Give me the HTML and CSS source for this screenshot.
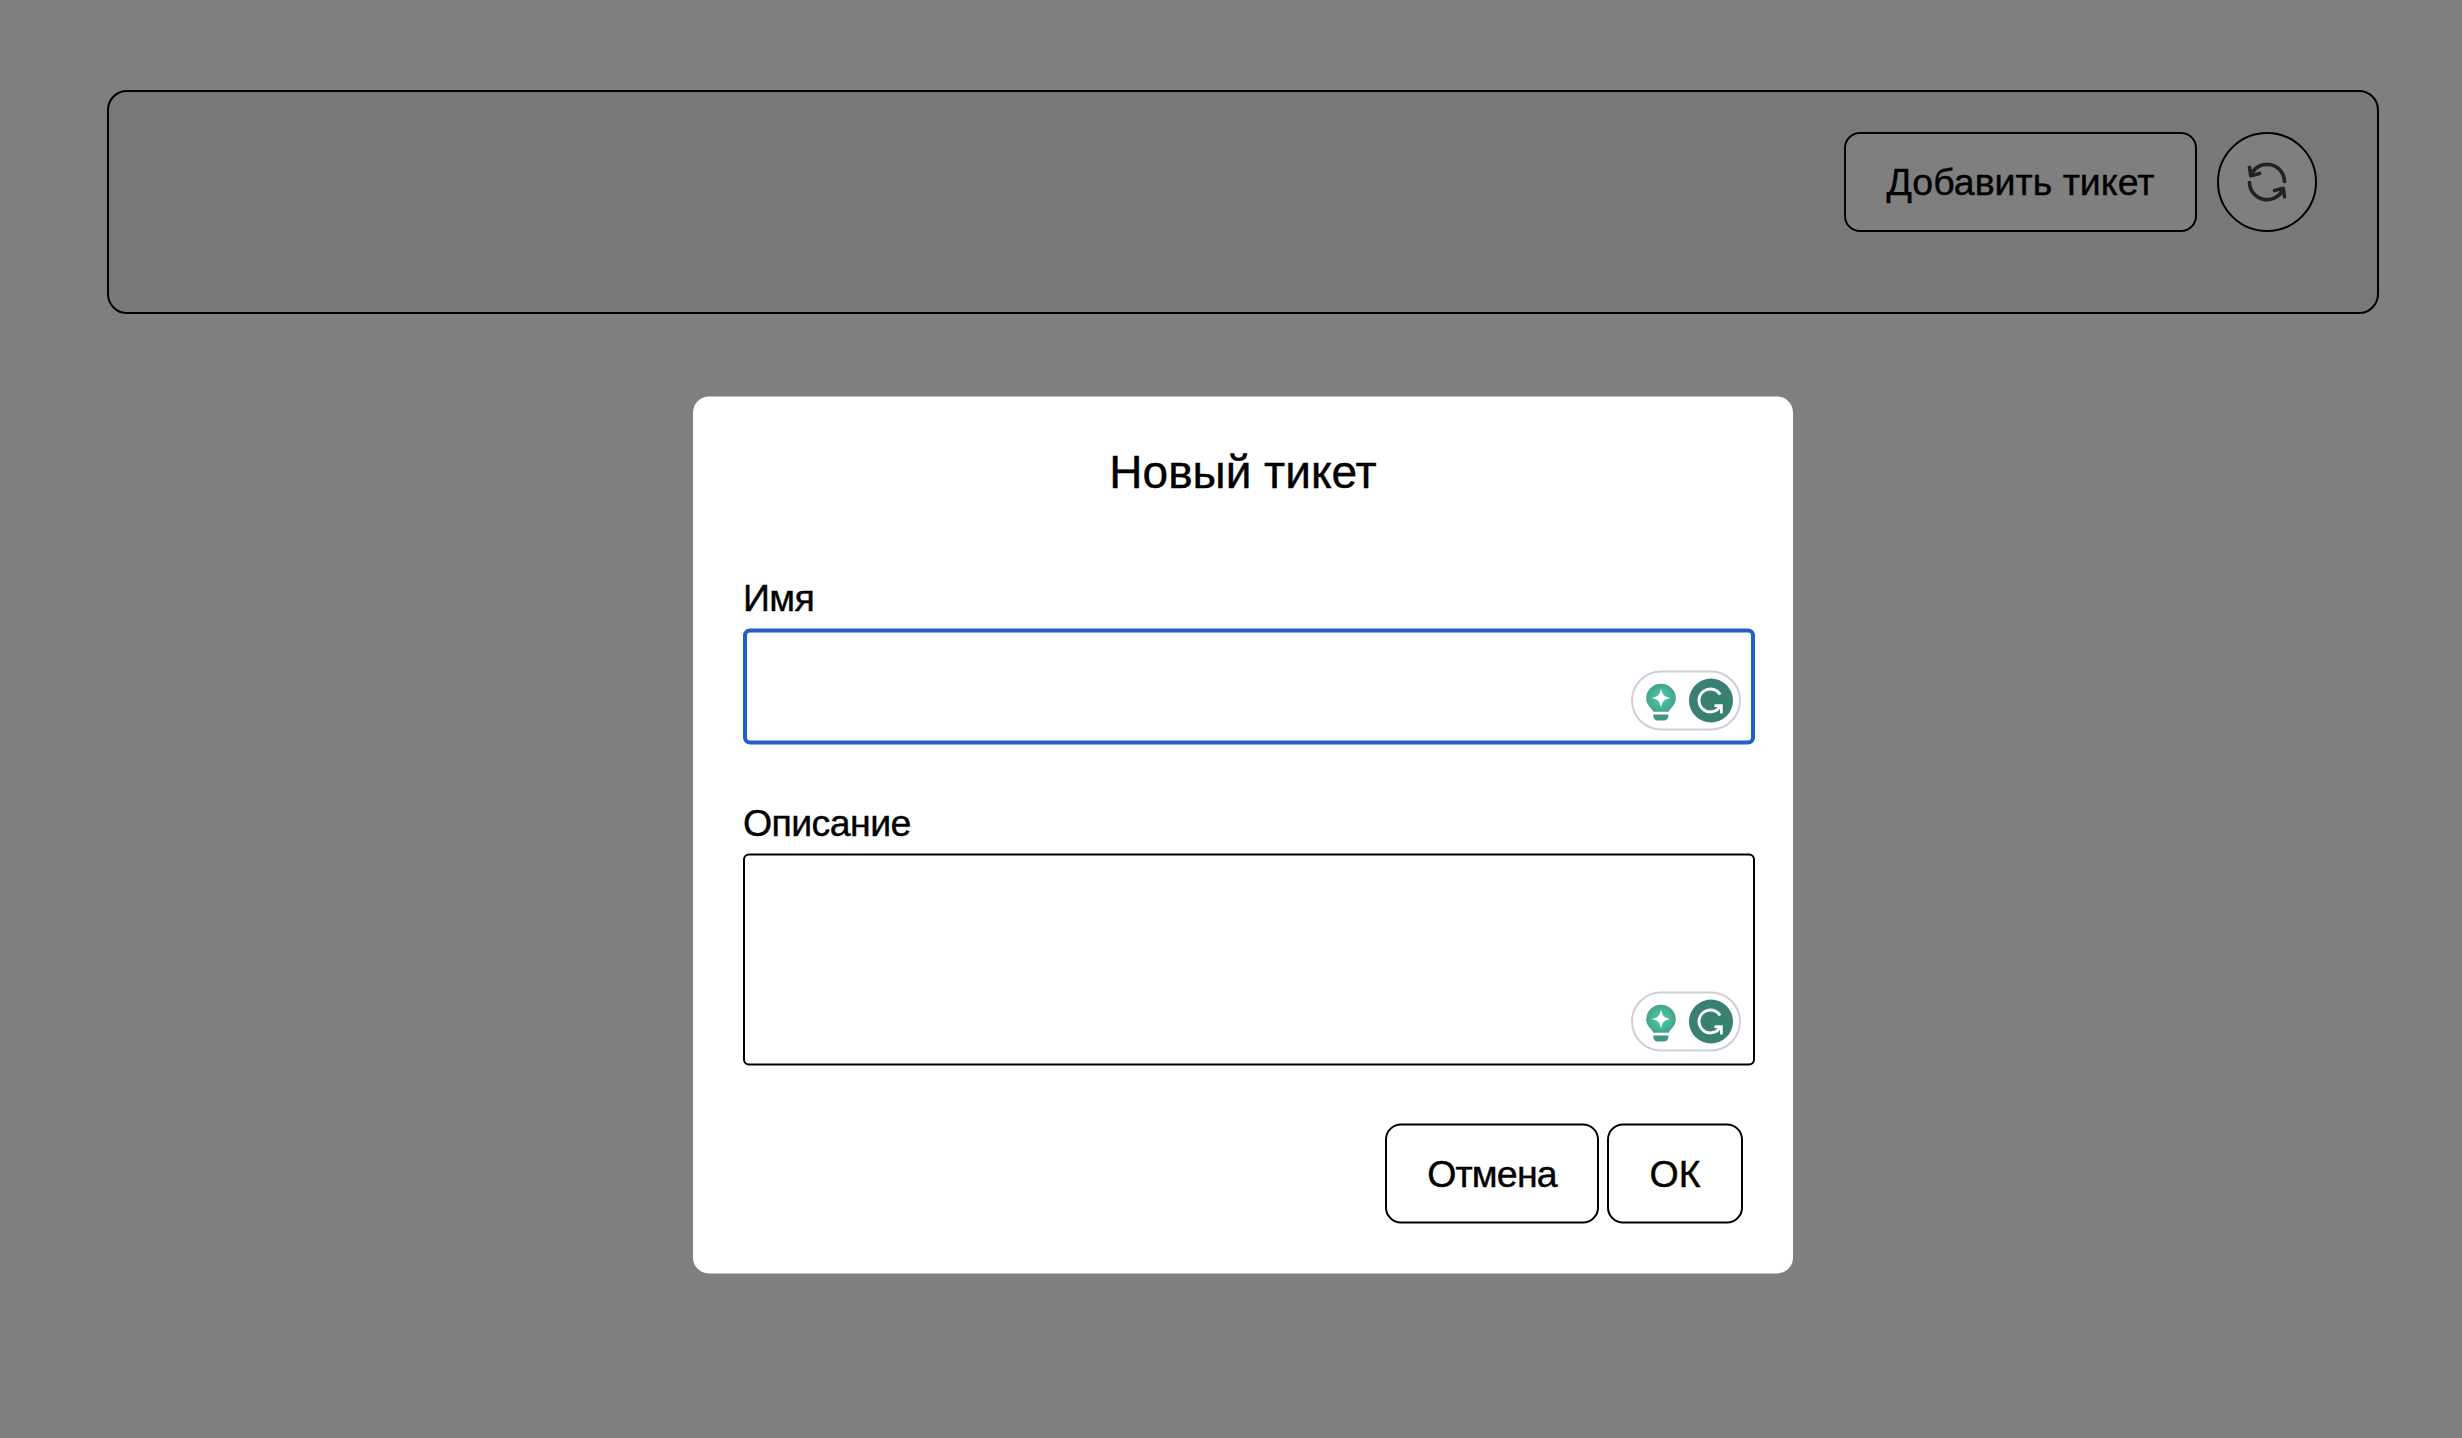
FILE: index.html
```html
<!DOCTYPE html>
<html lang="ru">
<head>
<meta charset="utf-8">
<title>Тикеты</title>
<link rel="stylesheet" href="styles.css">
</head>
<body>
<svg class="defs" width="0" height="0" aria-hidden="true">
  <defs>
    <radialGradient id="bulb-fill" cx="50%" cy="52%" r="58%">
      <stop offset="0.35" stop-color="#48bd9f"/>
      <stop offset="1" stop-color="#439c86"/>
    </radialGradient>
    <symbol id="assistant" viewBox="0 0 106 56">
      <path d="M28 11.200a14.800 14.800 0 0 0-14.800 14.800c0 6.300 5 9 7.300 13.200h15C38 35 42.800 32.300 42.800 26a14.800 14.800 0 0 0-14.800-14.800z" fill="url(#bulb-fill)"/>
      <path d="M28 17c1.400 5.600 2.800 7 8.300 8.500-5.500 1.500-6.900 2.900-8.300 8.500-1.400-5.600-2.800-7-8.300-8.500 5.500-1.500 6.900-2.900 8.300-8.500z" fill="#fff" stroke="#fff" stroke-width=".5"/>
      <path d="M20.300 42h15v1.500c0 2.700-1.800 4.500-4.500 4.500h-6c-2.700 0-4.500-1.800-4.500-4.500z" fill="#3f9580"/>
      <circle cx="78" cy="28" r="22" fill="#388073"/>
      <path d="M87.100 22A11.400 11.400 0 1 0 86.200 35.200" fill="none" stroke="#fff" stroke-width="2.900"/>
      <path d="M81.500 33.100h6.900v8M88 33.500l-4.500 4.300" fill="none" stroke="#fff" stroke-width="2.700"/>
    </symbol>
  </defs>
</svg>
<header class="toolbar">
  <button class="button add" type="button"><span class="text">Добавить тикет</span></button>
  <button class="refresh" type="button" aria-label="Обновить">
    <svg width="40" height="40" viewBox="0 0 40 40" fill="none" stroke="#000" stroke-width="3.700" stroke-linecap="round" stroke-linejoin="round">
      <path d="M37.500 19.500A17.500 17.500 0 0 0 4.500 11.700M2.500 20.500A17.500 17.500 0 0 0 35.500 28.300"/>
      <path d="M2.500 5.300l1.300 8.400 8.700-2.200M37.500 34.700l-1.300-8.400-8.700 2.200"/>
    </svg>
  </button>
</header>
<div class="backdrop">
  <form class="modal">
    <h1 class="title"><span class="text">Новый тикет</span></h1>
    <label class="label name-label" for="name"><span class="text">Имя</span></label>
    <div class="field">
      <input class="input" id="name" type="text">
      <span class="badge"><svg width="106" height="56"><use href="#assistant"/></svg></span>
    </div>
    <label class="label desc-label" for="desc"><span class="text">Описание</span></label>
    <div class="field">
      <textarea class="input area" id="desc"></textarea>
      <span class="badge"><svg width="106" height="56"><use href="#assistant"/></svg></span>
    </div>
    <div class="actions">
      <button class="button cancel" type="button"><span class="text">Отмена</span></button>
      <button class="button ok" type="button"><span class="text">ОК</span></button>
    </div>
  </form>
</div>
</body>
</html>
```
FILE: styles.css
```css
* { box-sizing: border-box; }

body {
  margin: 0;
  height: 1438px;
  padding: 90px 83px 0 107px;
  overflow: hidden;
  background: #fff;
  color: #000;
  font-family: "Liberation Sans", Arial, sans-serif;
  font-size: 37.500px;
}

.defs { position: absolute; }

.text { -webkit-text-stroke: .4px #000; }

.toolbar {
  display: flex;
  justify-content: flex-end;
  align-items: flex-start;
  gap: 20px;
  height: 224px;
  padding: 40px 60px;
  border: 2px solid #000;
  border-radius: 20px;
  background: #f0f0f0;
}

.button,
.refresh {
  height: 100px;
  padding: 0;
  border: 2px solid #000;
  background: #fff;
  color: #000;
  font: inherit;
  line-height: 44px;
  white-space: nowrap;
}

.button { border-radius: 16px; }
.add { width: 353px; letter-spacing: 0; }

.refresh {
  display: flex;
  align-items: center;
  justify-content: center;
  width: 100px;
  border-radius: 50%;
}

.refresh svg { opacity: .73; }

.backdrop {
  position: fixed;
  inset: 0;
  display: flex;
  justify-content: center;
  align-items: flex-start;
  padding: 396px 0 0 24px;
  background: rgba(0, 0, 0, .5);
}

.modal {
  display: flex;
  flex-direction: column;
  width: 1100px;
  height: 877px;
  padding: 48px 38px 50px 50px;
  border-radius: 16px;
  background: #fff;
  transform: translateY(.5px);
}

.title {
  margin: 0 12px 0 0;
  font-size: 46px;
  font-weight: 400;
  line-height: 54px;
  text-align: center;
}

.label { height: 44px; line-height: 44px; letter-spacing: -.600px; }
.name-label { margin: 77px 0 9px; }
.desc-label { margin: 56px 0 9px; }

.field { position: relative; display: flex; }

.input {
  width: 1012px;
  height: 116px;
  border: 4px solid #205ec9;
  border-radius: 7px;
  outline: 0;
  background: #fff;
  font: inherit;
}

.area {
  height: 212px;
  border: 2px solid #000;
  border-radius: 6px;
  resize: none;
}

.badge {
  position: absolute;
  right: 14px;
  bottom: 14px;
  display: flex;
  width: 110px;
  height: 60px;
  border: 2px solid #cdcfdd;
  border-radius: 30px;
  background: #fff;
}

.actions {
  display: flex;
  justify-content: flex-end;
  gap: 8px;
  margin: 58px 12px 0 0;
}

.cancel { width: 214px; letter-spacing: -.800px; }
.ok { width: 136px; }
```
